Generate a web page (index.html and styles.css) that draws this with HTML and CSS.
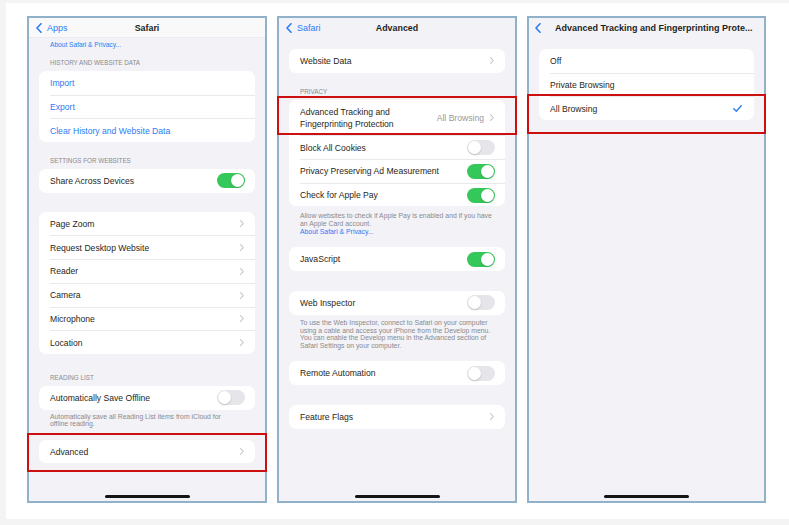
FILE: index.html
```html
<!DOCTYPE html>
<html lang="en">
<head>
<meta charset="utf-8">
<title>Safari Advanced Tracking settings</title>
<link rel="stylesheet" href="styles.css">
</head>
<body>
<div class="frame">

  <!-- Phone 1: Safari -->
  <div class="phone">
    <div class="nav tinted">
      <span class="back"><svg class="nav-chev" width="6" height="10" viewBox="0 0 6 10"><path d="M5 0.8 L1 5 L5 9.2"/></svg>Apps</span>
      <span class="title">Safari</span>
      <span></span>
    </div>
    <div class="content flush">
      <p class="foot link top">About Safari &amp; Privacy...</p>
      <p class="section-head first">History and Website Data</p>
      <div class="card">
        <div class="row"><span class="label link">Import</span></div>
        <div class="row"><span class="label link">Export</span></div>
        <div class="row"><span class="label link">Clear History and Website Data</span></div>
      </div>
      <p class="section-head">Settings for Websites</p>
      <div class="card">
        <div class="row"><span class="label">Share Across Devices</span><span class="toggle"><span class="knob"></span></span></div>
      </div>
      <div class="gap short"></div>
      <div class="card">
        <div class="row"><span class="label">Page Zoom</span><svg class="chev" width="4" height="7" viewBox="0 0 4 7"><path d="M0.6 0.6 L3.3 3.5 L0.6 6.4"/></svg></div>
        <div class="row"><span class="label">Request Desktop Website</span><svg class="chev" width="4" height="7" viewBox="0 0 4 7"><path d="M0.6 0.6 L3.3 3.5 L0.6 6.4"/></svg></div>
        <div class="row"><span class="label">Reader</span><svg class="chev" width="4" height="7" viewBox="0 0 4 7"><path d="M0.6 0.6 L3.3 3.5 L0.6 6.4"/></svg></div>
        <div class="row"><span class="label">Camera</span><svg class="chev" width="4" height="7" viewBox="0 0 4 7"><path d="M0.6 0.6 L3.3 3.5 L0.6 6.4"/></svg></div>
        <div class="row"><span class="label">Microphone</span><svg class="chev" width="4" height="7" viewBox="0 0 4 7"><path d="M0.6 0.6 L3.3 3.5 L0.6 6.4"/></svg></div>
        <div class="row"><span class="label">Location</span><svg class="chev" width="4" height="7" viewBox="0 0 4 7"><path d="M0.6 0.6 L3.3 3.5 L0.6 6.4"/></svg></div>
      </div>
      <p class="section-head wide">Reading List</p>
      <div class="card">
        <div class="row"><span class="label">Automatically Save Offline</span><span class="toggle off"><span class="knob"></span></span></div>
      </div>
      <p class="foot tight">Automatically save all Reading List items from iCloud for<br>offline reading.</p>
      <div class="card mark mark-card">
        <div class="row"><span class="label">Advanced</span><svg class="chev" width="4" height="7" viewBox="0 0 4 7"><path d="M0.6 0.6 L3.3 3.5 L0.6 6.4"/></svg></div>
      </div>
    </div>
    <div class="home"></div>
  </div>

  <!-- Phone 2: Advanced -->
  <div class="phone">
    <div class="nav">
      <span class="back"><svg class="nav-chev" width="6" height="10" viewBox="0 0 6 10"><path d="M5 0.8 L1 5 L5 9.2"/></svg>Safari</span>
      <span class="title">Advanced</span>
      <span></span>
    </div>
    <div class="content">
      <div class="card">
        <div class="row"><span class="label">Website Data</span><svg class="chev" width="4" height="7" viewBox="0 0 4 7"><path d="M0.6 0.6 L3.3 3.5 L0.6 6.4"/></svg></div>
      </div>
      <p class="section-head">Privacy</p>
      <div class="card">
        <div class="row tall mark mark-row"><span class="label two">Advanced Tracking and<br>Fingerprinting Protection</span><span class="value">All Browsing</span><svg class="chev" width="4" height="7" viewBox="0 0 4 7"><path d="M0.6 0.6 L3.3 3.5 L0.6 6.4"/></svg></div>
        <div class="row"><span class="label">Block All Cookies</span><span class="toggle off"><span class="knob"></span></span></div>
        <div class="row"><span class="label">Privacy Preserving Ad Measurement</span><span class="toggle"><span class="knob"></span></span></div>
        <div class="row"><span class="label">Check for Apple Pay</span><span class="toggle"><span class="knob"></span></span></div>
      </div>
      <p class="foot loose">Allow websites to check if Apple Pay is enabled and if you have<br>an Apple Card account.<br><span class="link">About Safari &amp; Privacy...</span></p>
      <div class="card">
        <div class="row"><span class="label">JavaScript</span><span class="toggle"><span class="knob"></span></span></div>
      </div>
      <div class="gap"></div>
      <div class="card">
        <div class="row"><span class="label">Web Inspector</span><span class="toggle off"><span class="knob"></span></span></div>
      </div>
      <p class="foot dense">To use the Web Inspector, connect to Safari on your computer<br>using a cable and access your iPhone from the Develop menu.<br>You can enable the Develop menu in the Advanced section of<br>Safari Settings on your computer.</p>
      <div class="card">
        <div class="row"><span class="label">Remote Automation</span><span class="toggle off"><span class="knob"></span></span></div>
      </div>
      <div class="gap"></div>
      <div class="card">
        <div class="row"><span class="label">Feature Flags</span><svg class="chev" width="4" height="7" viewBox="0 0 4 7"><path d="M0.6 0.6 L3.3 3.5 L0.6 6.4"/></svg></div>
      </div>
    </div>
    <div class="home"></div>
  </div>

  <!-- Phone 3: Advanced Tracking -->
  <div class="phone narrow">
    <div class="nav long">
      <span class="back"><svg class="nav-chev" width="6" height="10" viewBox="0 0 6 10"><path d="M5 0.8 L1 5 L5 9.2"/></svg></span>
      <span class="title">Advanced Tracking and Fingerprinting Prote...</span>
    </div>
    <div class="content">
      <div class="card">
        <div class="row"><span class="label">Off</span></div>
        <div class="row"><span class="label">Private Browsing</span></div>
        <div class="row mark mark-check"><span class="label">All Browsing</span><svg class="check" width="9" height="7" viewBox="0 0 9 7"><path d="M0.8 3.8 L3.3 6.2 L8.2 0.8"/></svg></div>
      </div>
    </div>
    <div class="home"></div>
  </div>

</div>
</body>
</html>
```
FILE: styles.css
```css
* {
  box-sizing: border-box;
  margin: 0;
  padding: 0;
}

html, body {
  height: 100%;
}

body {
  background: #f4f4f5;
  font-family: "Liberation Sans", Arial, sans-serif;
  color: #1f1f21;
}

.frame {
  margin: 3px 0 0 6px;
  height: 516px;
  background: #ffffff;
  display: flex;
  align-items: flex-start;
  gap: 10px;
  padding: 13px 0 0 21px;
}

.phone {
  width: 240px;
  height: 487px;
  border: 2px solid #8fb2ca;
  background: #f2f2f7;
  display: flex;
  flex-direction: column;
}

.phone.narrow {
  width: 239px;
}

/* Navigation bar */
.nav {
  height: 20px;
  flex-shrink: 0;
  display: grid;
  grid-template-columns: 1fr auto 1fr;
  align-items: center;
  padding: 0 7px;
}

.nav.tinted {
  background: #f9f9fa;
  border-bottom: 1px solid #ececf0;
}

.nav.long {
  grid-template-columns: auto 1fr;
  padding-left: 6px;
}

.back {
  display: flex;
  align-items: center;
  gap: 5px;
  color: #2a7bf4;
  font-size: 9px;
}

.nav-chev path {
  fill: none;
  stroke: #2a7bf4;
  stroke-width: 1.6;
  stroke-linecap: round;
  stroke-linejoin: round;
}

.title {
  font-weight: 700;
  font-size: 8.9px;
  color: #1f1f21;
  white-space: nowrap;
}

.nav.long .title {
  padding-left: 14px;
  font-size: 9px;
}

/* Content */
.content {
  flex: 1;
  padding-top: 11px;
}

.content.flush {
  padding-top: 0;
}

.card {
  background: #ffffff;
  border-radius: 7px;
  margin: 0 10px;
}

.row {
  margin-left: 11px;
  padding-right: 11px;
  height: 23.7px;
  display: flex;
  align-items: center;
  gap: 6px;
  font-size: 8.6px;
  white-space: nowrap;
}

.row + .row {
  border-top: 1px solid #e9e9ed;
}

.row.tall {
  height: 35.7px;
}

.label {
  flex: 1;
}

.label.two {
  line-height: 12px;
}

.link {
  color: #2a7bf4;
}

.value {
  color: #98989d;
}

.chev path {
  fill: none;
  stroke: #c4c4c8;
  stroke-width: 1.1;
  stroke-linecap: round;
  stroke-linejoin: round;
}

.check path {
  fill: none;
  stroke: #2a7bf4;
  stroke-width: 1.4;
  stroke-linecap: round;
  stroke-linejoin: round;
}

.check {
  margin-right: 1px;
}

/* Toggle switch */
.toggle {
  width: 28px;
  height: 15px;
  border-radius: 8px;
  background: #34c759;
  display: flex;
  justify-content: flex-end;
  padding: 1px;
  flex-shrink: 0;
  margin-right: -1px;
}

.toggle.off {
  background: #e6e6ea;
  justify-content: flex-start;
}

.knob {
  width: 13px;
  height: 13px;
  border-radius: 50%;
  background: #ffffff;
  box-shadow: 0 1px 2px rgba(0, 0, 0, 0.18);
}

/* Section headers and footers */
.section-head {
  margin: 0 10px;
  padding: 15px 11px 4px;
  font-size: 6.3px;
  line-height: 8px;
  color: #8a8a8e;
  text-transform: uppercase;
}

.section-head.first {
  padding-top: 10px;
}

.section-head.wide {
  padding-top: 20px;
}

.foot {
  margin: 0 10px;
  padding: 4px 11px 13px;
  font-size: 6.85px;
  line-height: 7.8px;
  color: #8a8a8e;
  white-space: nowrap;
}

.foot.top {
  padding: 3px 11px 0;
  font-size: 6.6px;
  line-height: 8px;
}

.foot.tight {
  padding-top: 3px;
  padding-bottom: 11.5px;
}

.foot.loose {
  padding-top: 5.5px;
  padding-bottom: 12px;
}

.foot.dense {
  line-height: 7.5px;
  padding-top: 4.5px;
  padding-bottom: 12px;
}

.foot .link,
.foot.link {
  color: #2a7bf4;
}

.gap {
  height: 20px;
}

.gap.short {
  height: 19px;
}

/* Red highlight boxes */
.mark {
  position: relative;
}

.mark::after {
  content: "";
  position: absolute;
  border: 2px solid #cc1010;
  pointer-events: none;
}

.mark-card::after {
  left: -12px;
  right: -12px;
  top: -7px;
  bottom: -9px;
}

.mark-row::after {
  left: -23px;
  right: -12px;
  top: -4px;
  bottom: 0;
}

.mark-check::after {
  left: -23px;
  right: -12px;
  top: -3px;
  bottom: -14px;
}

/* Home indicator */
.home {
  width: 85px;
  height: 3px;
  border-radius: 2px;
  background: #151515;
  align-self: center;
  flex-shrink: 0;
  margin-bottom: 3.5px;
}
```
